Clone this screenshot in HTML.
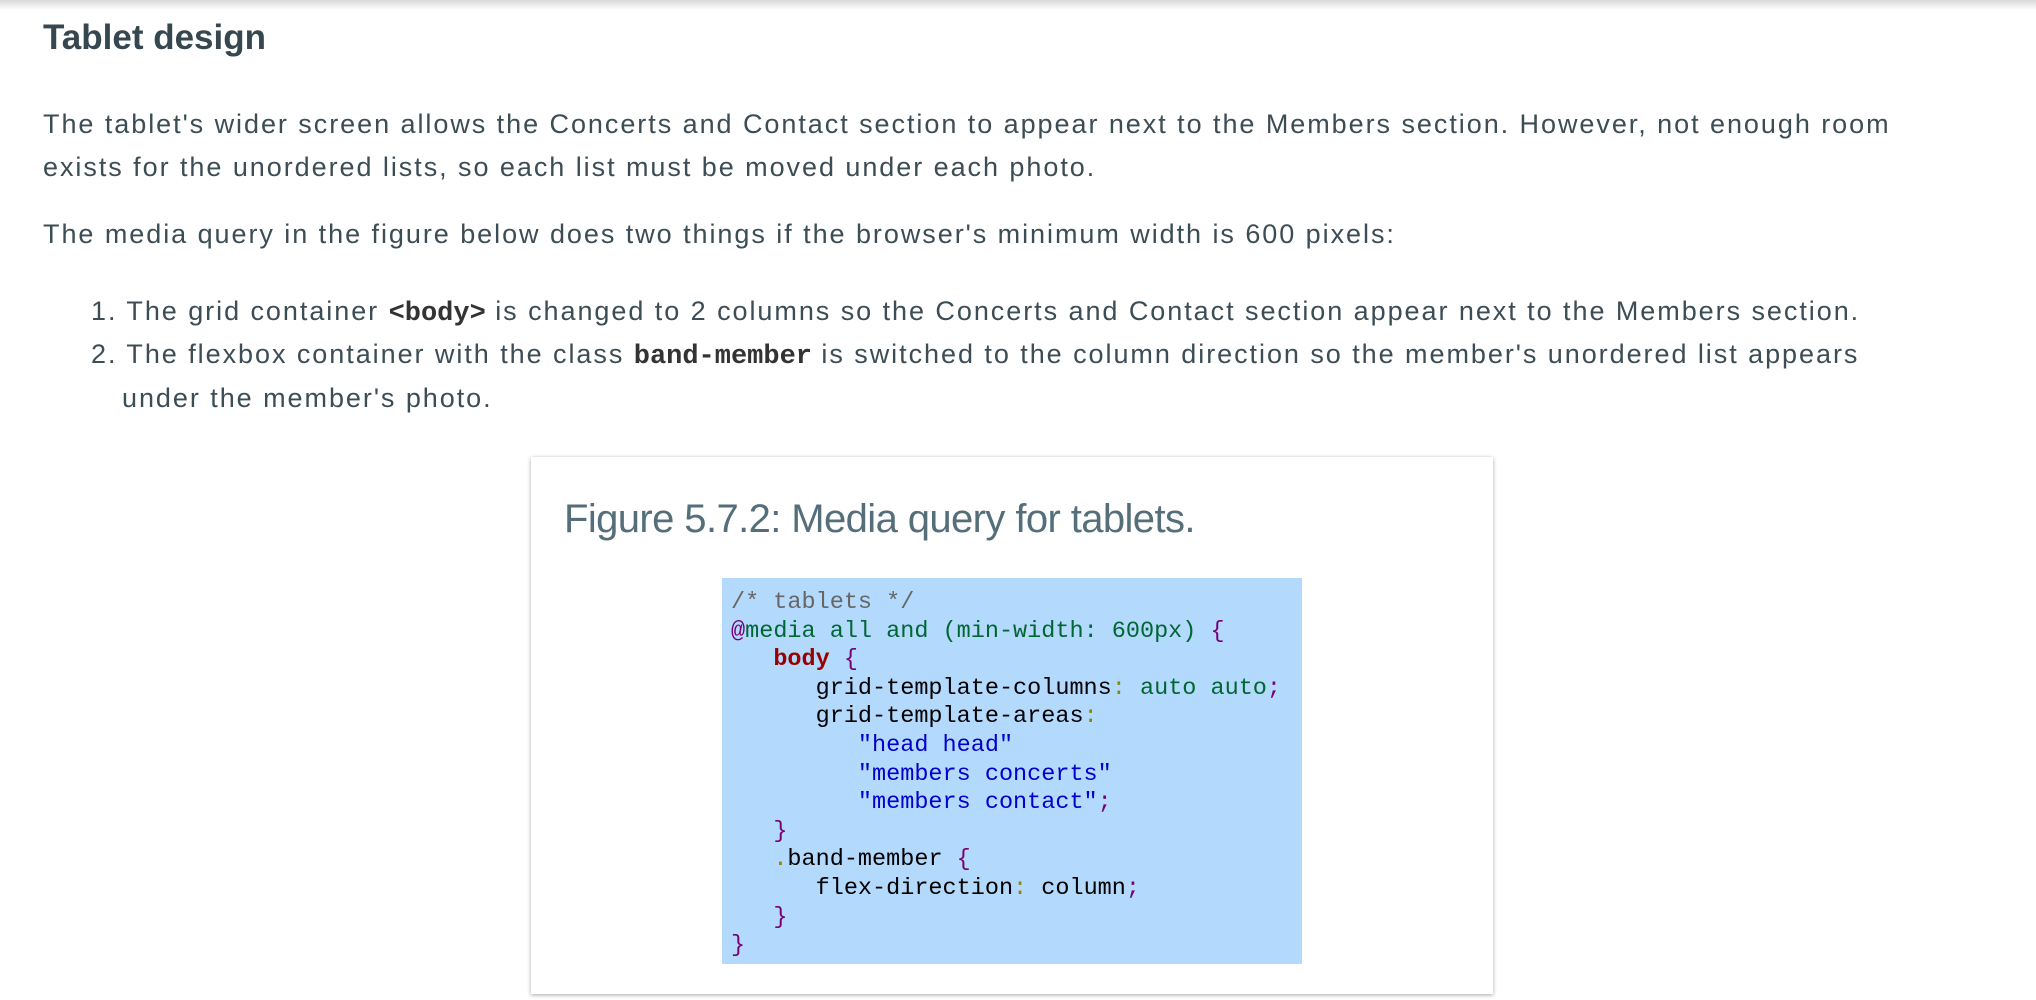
<!DOCTYPE html>
<html><head><meta charset="utf-8"><style>
body{margin:0;width:2036px;height:1000px;overflow:hidden;background:#fff;font-family:"Liberation Sans",sans-serif;color:#37474f;position:relative}
.top{position:absolute;left:0;top:0;width:2036px;height:10px;background:linear-gradient(#d8d8d8,#fff)}
.t{position:absolute;white-space:nowrap;font-size:27px;letter-spacing:1.95px;color:#3c4d55}
h1{position:absolute;left:43px;top:18px;margin:0;font-size:35px;font-weight:bold;color:#37474f}
code,.m{font-family:"Liberation Mono",monospace;font-weight:bold;color:#333;letter-spacing:0}
.fig{position:absolute;left:531px;top:457px;width:962px;height:537px;background:#fff;box-shadow:0 1px 4px rgba(0,0,0,.35)}
.cap{position:absolute;left:33px;top:40px;font-size:40px;letter-spacing:-0.6px;color:#546e7a;white-space:nowrap}
.code{position:absolute;left:191px;top:121px;width:580px;height:386px;background:#b3d9fd}
pre{margin:0;position:absolute;left:9px;top:11px;font-family:"Liberation Mono",monospace;font-size:23.5px;line-height:28.6px;color:#000}
.c{color:#666}.k{color:#707}.g{color:#063}.r{color:#900;font-weight:bold}.s{color:#00c}.y{color:#880}
</style></head><body>
<div class="top"></div>
<h1>Tablet design</h1>
<div class="t" style="left:43px;top:109px">The tablet's wider screen allows the Concerts and Contact section to appear next to the Members section. However, not enough room</div>
<div class="t" style="left:43px;top:152px">exists for the unordered lists, so each list must be moved under each photo.</div>
<div class="t" style="left:43px;top:219px">The media query in the figure below does two things if the browser's minimum width is 600 pixels:</div>
<div class="t" style="left:91px;top:296px">1. The grid container <code>&lt;body&gt;</code> is changed to 2 columns so the Concerts and Contact section appear next to the Members section.</div>
<div class="t" style="left:91px;top:339px">2. The flexbox container with the class <code>band-member</code> is switched to the column direction so the member's unordered list appears</div>
<div class="t" style="left:122px;top:383px">under the member's photo.</div>
<div class="fig">
<div class="cap">Figure 5.7.2: Media query for tablets.</div>
<div class="code"><pre><span class="c">/* tablets */</span>
<span class="k">@</span><span class="g">media all and (min-width: 600px)</span> <span class="k">{</span>
   <span class="r">body</span> <span class="k">{</span>
      grid-template-columns<span class="y">:</span> <span class="g">auto auto</span><span class="k">;</span>
      grid-template-areas<span class="y">:</span>
         <span class="s">"head head"</span>
         <span class="s">"members concerts"</span>
         <span class="s">"members contact"</span><span class="k">;</span>
   <span class="k">}</span>
   <span class="y">.</span>band-member <span class="k">{</span>
      flex-direction<span class="y">:</span> column<span class="k">;</span>
   <span class="k">}</span>
<span class="k">}</span></pre></div>
</div>
</body></html>
